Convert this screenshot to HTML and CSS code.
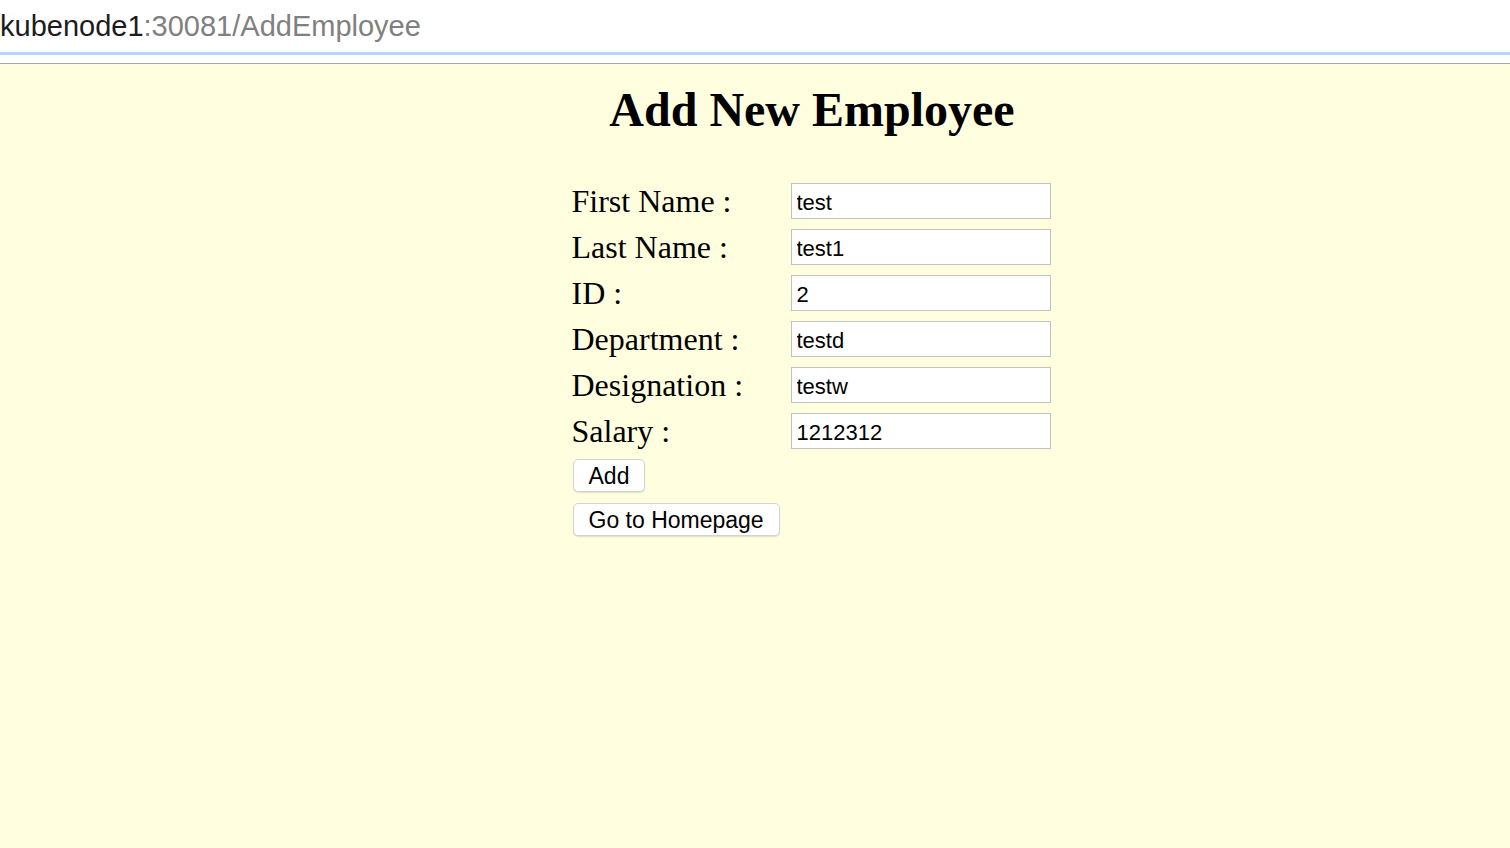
FILE: index.html
```html
<!DOCTYPE html>
<html>
<head>
<meta charset="utf-8">
<title>Add Employee</title>
<link rel="stylesheet" href="styles.css">
</head>
<body>
<div class="chrome">
  <div class="url"><span class="host">kubenode1</span><span class="path">:30081/AddEmployee</span></div>
  <div class="progress"></div>
  <div class="gap"></div>
</div>
<main class="page">
  <h1 class="title">Add New Employee</h1>
  <form class="form">
    <div class="grid">
      <label class="label">First Name :</label><input class="field" type="text" value="test">
      <label class="label">Last Name :</label><input class="field" type="text" value="test1">
      <label class="label">ID :</label><input class="field" type="text" value="2">
      <label class="label">Department :</label><input class="field" type="text" value="testd">
      <label class="label">Designation :</label><input class="field" type="text" value="testw">
      <label class="label">Salary :</label><input class="field" type="text" value="1212312">
    </div>
    <div class="actions">
      <button type="button" class="btn">Add</button>
      <button type="button" class="btn">Go to Homepage</button>
    </div>
  </form>
</main>
</body>
</html>
```

FILE: styles.css
```css
html, body {
  margin: 0;
  padding: 0;
  height: 100%;
}
body {
  background: #ffffe0;
  font-family: "Liberation Serif", "Times New Roman", serif;
  color: #000;
}
.chrome {
  background: #fff;
}
.url {
  height: 52px;
  display: flex;
  align-items: center;
  font-family: "Liberation Sans", Arial, sans-serif;
  font-size: 29px;
  padding-top: 1px;
  box-sizing: border-box;
}
.host { color: #1c1c1c; }
.path { color: #808080; }
.progress {
  height: 3px;
  background: #b3d4fb;
}
.gap {
  height: 8px;
  border-bottom: 1px solid #a9a9a9;
}
.page {
  padding-left: 114px;
  display: flex;
  flex-direction: column;
  align-items: center;
}
.title {
  font-size: 48px;
  font-weight: bold;
  margin: 18px 0 0 0;
  line-height: 55px;
}
.form {
  margin-top: 46px;
  width: 479px;
  margin-left: -2px;
}
.grid {
  display: grid;
  grid-template-columns: 219px 260px;
  grid-auto-rows: 36px;
  row-gap: 10px;
  align-items: center;
}
.label {
  font-size: 32px;
  line-height: 36px;
  padding-top: 0;
}
.field {
  box-sizing: border-box;
  width: 260px;
  height: 36px;
  margin: 0;
  border: 1px solid #c2c2c2;
  background: #fff;
  padding: 3px 4px 0 5px;
  font-family: "Liberation Sans", Arial, sans-serif;
  font-size: 22px;
  color: #000;
  outline: none;
}
.actions {
  margin-top: 10px;
  display: flex;
  flex-direction: column;
  align-items: flex-start;
  gap: 11px;
  padding-left: 1px;
}
.btn {
  box-sizing: border-box;
  height: 33px;
  padding: 1px 15px 0 15px;
  margin: 0;
  background: #fff;
  border: 1px solid #d3d3d3;
  border-radius: 5px;
  box-shadow: 0 1px 1px rgba(0,0,0,0.12);
  font-family: "Liberation Sans", Arial, sans-serif;
  font-size: 23px;
  color: #000;
}
```
